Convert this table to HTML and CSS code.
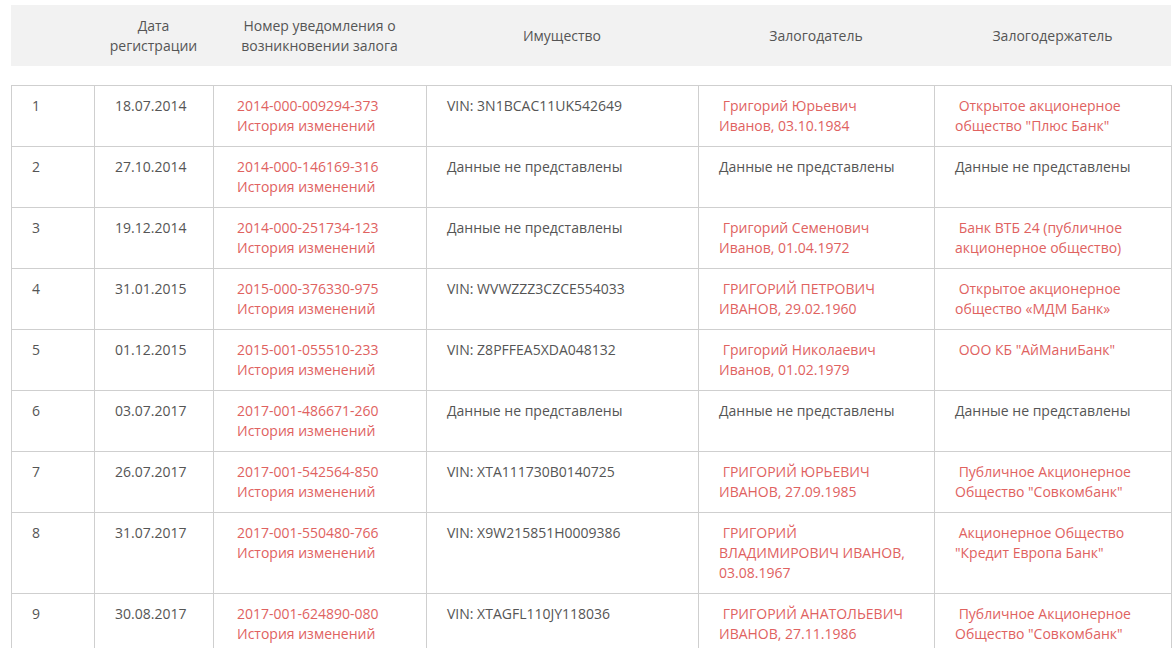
FILE: index.html
```html
<!DOCTYPE html>
<html lang="ru">
<head>
<meta charset="utf-8">
<title>Реестр залогов</title>
<link rel="stylesheet" href="styles.css">
</head>
<body>
<div class="page">
  <table class="head">
    <colgroup>
      <col class="c1"><col class="c2"><col class="c3"><col class="c4"><col class="c5"><col class="c6">
    </colgroup>
    <tr>
      <th></th>
      <th>Дата<br>регистрации</th>
      <th>Номер уведомления о<br>возникновении залога</th>
      <th>Имущество</th>
      <th>Залогодатель</th>
      <th>Залогодержатель</th>
    </tr>
  </table>
  <table class="list">
    <colgroup>
      <col class="c1"><col class="c2"><col class="c3"><col class="c4"><col class="c5"><col class="c6">
    </colgroup>
    <tbody>
      <tr>
        <td>1</td><td class="date">18.07.2014</td>
        <td class="num"><a href="#">2014-000-009294-373</a><br><a href="#">История изменений</a></td>
        <td>VIN: 3N1BCAC11UK542649</td>
        <td><a href="#">&nbsp;Григорий Юрьевич Иванов, 03.10.1984</a></td>
        <td><a href="#">&nbsp;Открытое акционерное общество "Плюс Банк"</a></td>
      </tr>
      <tr>
        <td>2</td><td class="date">27.10.2014</td>
        <td class="num"><a href="#">2014-000-146169-316</a><br><a href="#">История изменений</a></td>
        <td>Данные не представлены</td>
        <td>Данные не представлены</td>
        <td>Данные не представлены</td>
      </tr>
      <tr>
        <td>3</td><td class="date">19.12.2014</td>
        <td class="num"><a href="#">2014-000-251734-123</a><br><a href="#">История изменений</a></td>
        <td>Данные не представлены</td>
        <td><a href="#">&nbsp;Григорий Семенович Иванов, 01.04.1972</a></td>
        <td><a href="#">&nbsp;Банк ВТБ 24 (публичное акционерное общество)</a></td>
      </tr>
      <tr>
        <td>4</td><td class="date">31.01.2015</td>
        <td class="num"><a href="#">2015-000-376330-975</a><br><a href="#">История изменений</a></td>
        <td>VIN: WVWZZZ3CZCE554033</td>
        <td><a href="#">&nbsp;ГРИГОРИЙ ПЕТРОВИЧ ИВАНОВ, 29.02.1960</a></td>
        <td><a href="#">&nbsp;Открытое акционерное общество «МДМ Банк»</a></td>
      </tr>
      <tr>
        <td>5</td><td class="date">01.12.2015</td>
        <td class="num"><a href="#">2015-001-055510-233</a><br><a href="#">История изменений</a></td>
        <td>VIN: Z8PFFEA5XDA048132</td>
        <td><a href="#">&nbsp;Григорий Николаевич Иванов, 01.02.1979</a></td>
        <td><a href="#">&nbsp;ООО КБ "АйМаниБанк"</a></td>
      </tr>
      <tr>
        <td>6</td><td class="date">03.07.2017</td>
        <td class="num"><a href="#">2017-001-486671-260</a><br><a href="#">История изменений</a></td>
        <td>Данные не представлены</td>
        <td>Данные не представлены</td>
        <td>Данные не представлены</td>
      </tr>
      <tr>
        <td>7</td><td class="date">26.07.2017</td>
        <td class="num"><a href="#">2017-001-542564-850</a><br><a href="#">История изменений</a></td>
        <td>VIN: XTA111730B0140725</td>
        <td><a href="#">&nbsp;ГРИГОРИЙ ЮРЬЕВИЧ ИВАНОВ, 27.09.1985</a></td>
        <td><a href="#">&nbsp;Публичное Акционерное Общество "Совкомбанк"</a></td>
      </tr>
      <tr>
        <td>8</td><td class="date">31.07.2017</td>
        <td class="num"><a href="#">2017-001-550480-766</a><br><a href="#">История изменений</a></td>
        <td>VIN: X9W215851H0009386</td>
        <td><a href="#">&nbsp;ГРИГОРИЙ ВЛАДИМИРОВИЧ ИВАНОВ, 03.08.1967</a></td>
        <td><a href="#">&nbsp;Акционерное Общество "Кредит Европа Банк"</a></td>
      </tr>
      <tr>
        <td>9</td><td class="date">30.08.2017</td>
        <td class="num"><a href="#">2017-001-624890-080</a><br><a href="#">История изменений</a></td>
        <td>VIN: XTAGFL110JY118036</td>
        <td><a href="#">&nbsp;ГРИГОРИЙ АНАТОЛЬЕВИЧ ИВАНОВ, 27.11.1986</a></td>
        <td><a href="#">&nbsp;Публичное Акционерное Общество "Совкомбанк"</a></td>
      </tr>
    </tbody>
  </table>
</div>
</body>
</html>
```
FILE: styles.css
```css
html, body {
  margin: 0;
  padding: 0;
  background: #fff;
}
body {
  font-family: "Open Sans", "Liberation Sans", sans-serif;
  font-size: 14px;
  line-height: 20px;
  color: #555;
}
.page {
  padding: 5px 5px 0 11px;
}
table {
  width: 1160px;
  table-layout: fixed;
  border-collapse: collapse;
  border-spacing: 0;
}
.c1 { width: 83px; }
.c2 { width: 119px; }
.c3 { width: 213px; }
.c4 { width: 272px; }
.c5 { width: 236px; }
.c6 { width: 237px; }

.head {
  background: #f2f2f2;
  margin-bottom: 19px;
}
.head th {
  font-weight: normal;
  text-align: center;
  vertical-align: middle;
  height: 61px;
  padding: 0 10px;
  color: #555;
}
.list td {
  border: 1px solid #cfcfcf;
  padding: 10px 20px;
  vertical-align: top;
  text-align: left;
}
.list td.date {
  padding-left: 20px;
  padding-right: 10px;
}
.list td.num {
  padding-left: 23px;
}
a {
  color: #e0625f;
  text-decoration: none;
}
```
